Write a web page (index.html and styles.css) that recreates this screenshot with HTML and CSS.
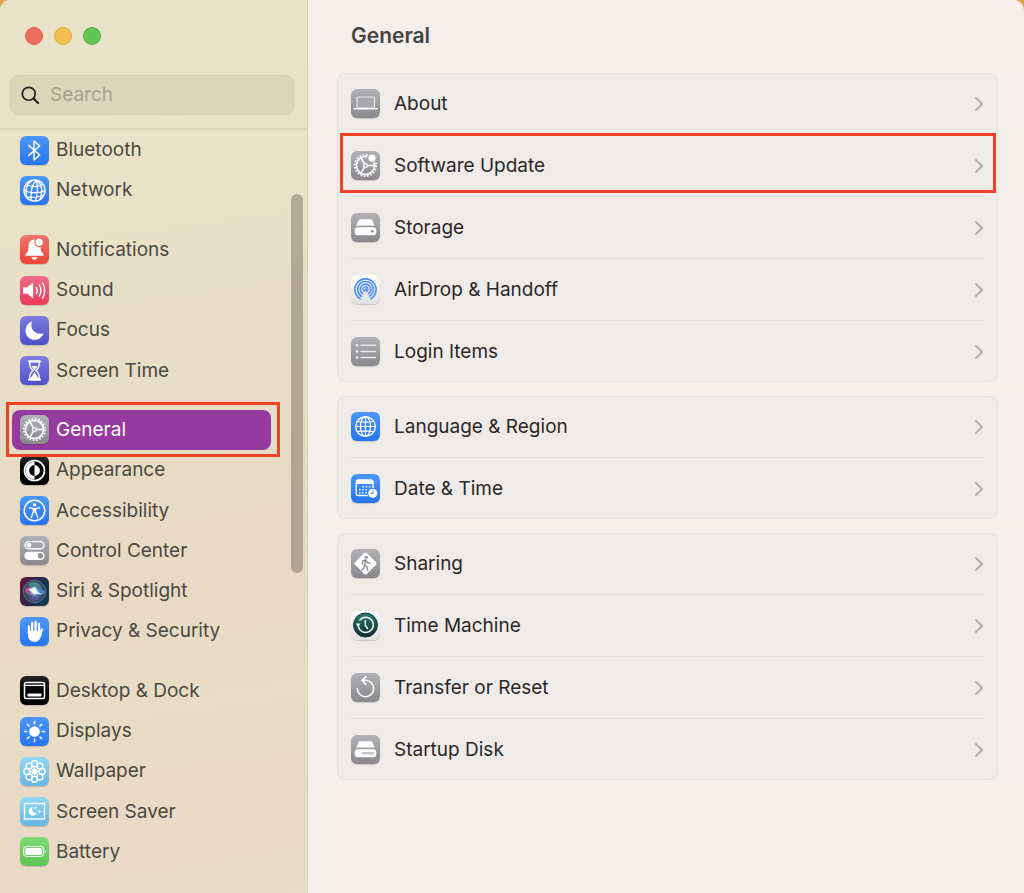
FILE: index.html
```html
<!DOCTYPE html>
<html lang="en">
<head>
<meta charset="utf-8">
<meta name="viewport" content="width=device-width, initial-scale=1">
<title>General</title>
<link rel="stylesheet" href="styles.css">
</head>
<body>
<svg class="defs" aria-hidden="true">
  <symbol id="gear" viewBox="0 0 29 29">
    <circle cx="14.5" cy="14.5" r="10.6" fill="none" stroke="#fff" stroke-width="1.9" stroke-dasharray="1.7 1.63"/>
    <circle cx="14.5" cy="14.5" r="9" fill="none" stroke="#fff" stroke-width="1.5"/>
    <circle cx="14.5" cy="14.5" r="1.9" fill="none" stroke="#fff" stroke-width="1.2"/>
    <path d="M16.4 14.5h7M13.5 12.8L10 6.8M13.5 16.2L10 22.2" fill="none" stroke="#fff" stroke-width="1.4"/>
  </symbol>
</svg>
<div class="window">
  <aside class="sidebar">
    <header class="sidebar-head">
      <div class="lights">
        <button class="light close" aria-label="Close"></button>
        <button class="light minimize" aria-label="Minimize"></button>
        <button class="light expand" aria-label="Zoom"></button>
      </div>
      <label class="search">
        <svg viewBox="0 0 20 20" aria-hidden="true"><g fill="none" stroke="#24221c" stroke-linecap="round"><circle cx="8.2" cy="8.2" r="6.8" stroke-width="1.8"/><path d="M13.2 13.2l4.8 4.8" stroke-width="2.2"/></g></svg>
        <input type="search" placeholder="Search" aria-label="Search">
      </label>
    </header>
    <nav class="nav">
      <ul class="nav-list">
        <li><a class="item" href="#"><svg class="icon blue" viewBox="0 0 29 29"><path d="M8.7 9.4l11 9.6-5.7 5V5l5.7 5-11 9.4" fill="none" stroke="#fff" stroke-width="1.5" stroke-linejoin="round" stroke-linecap="round"/></svg>Bluetooth</a></li>
        <li><a class="item" href="#"><svg class="icon blue" viewBox="0 0 29 29"><g fill="none" stroke="#fff" stroke-width="1.3"><circle cx="14.5" cy="14.5" r="10.5" stroke-width="1.5"/><path d="M16.5 4.2C12 8 10.3 14 11.2 24.5M16.5 4.2C17.5 9 18 17 15.5 25M16.5 4.2C22 8 23 15 20 23.500M12.500 4.300C7 7 5 13 6.800 21.500M6.500 8.500C12 11.200 18 11 23 8.500M4 14.500C11 17.500 18 17.500 25 14.500M6.500 21C12 22 17 21.500 23 19.500"/></g></svg>Network</a></li>
        <li class="group-start"><a class="item" href="#"><svg class="icon red" viewBox="0 0 29 29"><path d="M14.500 4.500c-4.100 0-5.700 3-5.900 7-.2 4-.8 5.500-3 7.500-.5.700-.2 1.800.7 1.800h16.400c.9 0 1.200-1.100.7-1.800-2-2-2.800-3.500-3-7.500z" fill="#fff"/><path d="M11.500 22.300h6c-.5 1.600-1.500 2.400-3 2.400s-2.500-.8-3-2.400z" fill="#fff"/><circle cx="19.200" cy="7.300" r="4.900" fill="#ef6357"/><circle cx="19.200" cy="7.300" r="3.700" fill="#fff"/></svg>Notifications</a></li>
        <li><a class="item" href="#"><svg class="icon pink" viewBox="0 0 29 29"><path d="M4 11.200h3.600l4.400-4c.6-.5 1.100-.3 1.100.500v13.600c0 .8-.5 1-1.100.500l-4.400-4H4c-.7 0-1-.4-1-1v-4.600c0-.6.3-1 1-1z" fill="#fff"/><path d="M16.200 11.300c1.200 1.800 1.200 4.600 0 6.400M19.300 9c2 3.200 2 7.800 0 11M22.500 6.900c2.900 4.500 2.900 10.700 0 15.200" fill="none" stroke="#fff" stroke-width="1.400" stroke-linecap="round"/></svg>Sound</a></li>
        <li><a class="item" href="#"><svg class="icon indigo" viewBox="0 0 29 29"><path d="M12 5.600C9.500 12.500 14.500 19.500 23.500 17.500 22 21.600 18.600 23.800 14.700 23.800 9.700 23.800 5.600 20 5.600 14.700 5.600 10.500 8 7 12 5.600z" fill="#fff"/></svg>Focus</a></li>
        <li><a class="item" href="#"><svg class="icon indigo" viewBox="0 0 29 29"><path d="M9 5.400h11M9 23.600h11" stroke="#fff" stroke-width="2.200" stroke-linecap="round"/><path d="M9.700 6c0 5 .8 6.300 3.500 8.500-2.700 2.200-3.500 3.500-3.500 8.500h9.600c0-5-.8-6.300-3.500-8.500 2.700-2.200 3.500-3.500 3.500-8.500" fill="none" stroke="#fff" stroke-width="1.400"/><path d="M11.300 10h6.400l-3.200 4.200zM14.500 16l4 6.500h-8z" fill="#fff"/></svg>Screen Time</a></li>
        <li class="group-start"><a class="item selected highlight" href="#" aria-current="page"><svg class="icon gray" viewBox="0 0 29 29"><use href="#gear"/></svg>General</a></li>
        <li><a class="item" href="#"><svg class="icon black" viewBox="0 0 29 29"><circle cx="14.500" cy="14.500" r="10" fill="#080808" stroke="#fff" stroke-width="1.700"/><path d="M14.500 5.500a9 9 0 0 0 0 18v-3.600a5.400 5.400 0 0 1 0-10.800z" fill="#fff"/><path d="M14.500 9.100a5.400 5.400 0 0 1 0 10.800z" fill="#fff"/></svg>Appearance</a></li>
        <li><a class="item" href="#"><svg class="icon blue" viewBox="0 0 29 29"><circle cx="14.500" cy="14.500" r="10.300" fill="none" stroke="#fff" stroke-width="1.600"/><circle cx="14.500" cy="8.700" r="1.700" fill="#fff"/><path d="M9.500 11.800l3.800.8v3.500l-2 5.400M19.500 11.800l-3.800.8v3.500l2 5.400" fill="none" stroke="#fff" stroke-width="1.400" stroke-linecap="round" stroke-linejoin="round"/><path d="M13 12h3v4.600h-3z" fill="#fff"/></svg>Accessibility</a></li>
        <li><a class="item" href="#"><svg class="icon gray" viewBox="0 0 29 29"><rect x="5" y="5.600" width="19" height="7.200" rx="3.600" fill="none" stroke="#fff" stroke-width="1.400"/><circle cx="9" cy="9.200" r="2.400" fill="#fff"/><rect x="4.400" y="15.700" width="20.200" height="8.200" rx="4.100" fill="#fff"/><circle cx="20.500" cy="19.800" r="2.700" fill="#8e8e93"/></svg>Control Center</a></li>
        <li><a class="item" href="#"><svg class="icon siri" viewBox="0 0 29 29"><defs><radialGradient id="orb"><stop offset="0" stop-color="#fff"/><stop offset=".25" stop-color="#c9e2f4"/><stop offset=".6" stop-color="#5485b8" stop-opacity=".7"/><stop offset="1" stop-color="#235c7a" stop-opacity=".2"/></radialGradient></defs><circle cx="14.500" cy="14.500" r="11.300" fill="#3b4964" stroke="#458494" stroke-width=".8"/><path d="M5 13c4-5 8-5 10 2-3 5-8 4-10-2z" fill="#e94f8b" opacity=".85"/><path d="M8 7c6-4 12-1 14 5-5 0-10 0-14-5z" fill="#4fb89a" opacity=".65"/><path d="M14 15c3-4 8-4 11 0-3 4-8 4-11 0z" fill="#4ba2ff" opacity=".8"/><path d="M9 22c3-4 8-5 12-2-3 4-8 5-12 2z" fill="#7656b5" opacity=".6"/><circle cx="14.500" cy="14.500" r="7.500" fill="url(#orb)"/><path d="M8 12.500l7-3 2 4.500 5 3.500-7-.5z" fill="#fff" opacity=".75"/></svg>Siri &amp; Spotlight</a></li>
        <li><a class="item" href="#"><svg class="icon blue" viewBox="0 0 29 29"><g fill="none" stroke="#fff" stroke-width="2.300" stroke-linecap="round"><path d="M9 9.500V17M12.200 6v10M15.600 5v11M19 7v10M22 12.500l-2.600 6"/></g><path d="M7.850 14h12.300v2.500l2-1.500c-.9 6.200-3.300 9.800-7.700 9.800-4.600 0-6.600-3.300-6.600-8z" fill="#fff"/></svg>Privacy &amp; Security</a></li>
        <li class="group-start"><a class="item" href="#"><svg class="icon black" viewBox="0 0 29 29"><rect x="4.500" y="6.500" width="20" height="16" rx="1.800" fill="none" stroke="#fff" stroke-width="1.500"/><path d="M5 9.400h19" stroke="#fff" stroke-width="1.100"/><rect x="7.500" y="17.500" width="14" height="3" rx=".8" fill="#fff"/></svg>Desktop &amp; Dock</a></li>
        <li><a class="item" href="#"><svg class="icon blue" viewBox="0 0 29 29"><circle cx="14.500" cy="14.500" r="5.300" fill="#fff"/><path d="M14.500 4.600v2M14.500 22.400v2M4.600 14.500h2M22.400 14.500h2M7.500 7.500l1.400 1.400M20.100 20.100l1.400 1.400M7.500 21.500l1.400-1.400M20.100 8.900l1.400-1.400" stroke="#fff" stroke-width="1.700" stroke-linecap="round"/></svg>Displays</a></li>
        <li><a class="item" href="#"><svg class="icon sky" viewBox="0 0 29 29"><g fill="none" stroke="#fff" stroke-width="1.400"><circle cx="14.500" cy="6.800" r="3"/><circle cx="19.900" cy="9.100" r="3"/><circle cx="22.200" cy="14.500" r="3"/><circle cx="19.900" cy="19.900" r="3"/><circle cx="14.500" cy="22.200" r="3"/><circle cx="9.100" cy="19.900" r="3"/><circle cx="6.800" cy="14.500" r="3"/><circle cx="9.100" cy="9.100" r="3"/><circle cx="14.500" cy="14.500" r="2.200"/><path d="M14.500 9.500v10M9.500 14.500h10M11 11l7 7M18 11l-7 7" stroke-width="1"/></g></svg>Wallpaper</a></li>
        <li><a class="item" href="#"><svg class="icon sky" viewBox="0 0 29 29"><rect x="4.500" y="6.500" width="20" height="15.500" fill="none" stroke="#fff" stroke-width="1.400"/><path d="M12.500 10c-1.300 4 1 6.600 4.500 6.200-1 1.700-2.400 2.400-4 2.400-2.500 0-4.300-1.800-4.300-4.200 0-2.200 1.500-3.900 3.800-4.400zM15.600 9.200l.5 1.300 1.300.5-1.300.5-.5 1.300-.5-1.300-1.300-.5 1.300-.5zM19.500 12.200l.6 1.700 1.700.6-1.700.6-.6 1.700-.6-1.700-1.700-.6 1.700-.6z" fill="#fff"/></svg>Screen Saver</a></li>
        <li><a class="item" href="#"><svg class="icon green" viewBox="0 0 29 29"><rect x="3.600" y="9.500" width="20" height="10" rx="3" fill="none" stroke="#fff" stroke-width="1.200" opacity=".8"/><rect x="5.300" y="11.100" width="16.600" height="6.800" rx="1.600" fill="#fff"/><path d="M24.900 12.700c1.300.7 1.300 2.900 0 3.600z" fill="#fff"/></svg>Battery</a></li>
      </ul>
      <span class="scroll-thumb"></span>
    </nav>
  </aside>
  <main class="content">
    <h1 class="title">General</h1>
    <section class="card">
      <a class="row" href="#"><svg class="icon gray" viewBox="0 0 29 29"><rect x="6" y="8" width="17.500" height="11" rx="1.200" fill="#a9a9ad" stroke="#e8e8e9" stroke-width="1.200"/><path d="M3.200 19.700h22.600" stroke="#fff" stroke-width="1.500" stroke-linecap="round"/></svg><span class="name">About</span><svg class="chev" viewBox="0 0 10 16"><path d="M2 2l6 6-6 6"/></svg></a>
      <a class="row highlight" href="#"><svg class="icon gray" viewBox="0 0 29 29"><use href="#gear"/><circle cx="21" cy="7" r="4.800" fill="#adadb1"/><circle cx="21" cy="7" r="3.600" fill="#fff"/></svg><span class="name">Software Update</span><svg class="chev" viewBox="0 0 10 16"><path d="M2 2l6 6-6 6"/></svg></a>
      <a class="row" href="#"><svg class="icon gray" viewBox="0 0 29 29"><path d="M9.300 6.300h10.400c1 0 1.600.5 1.900 1.300l2.200 5.300c-1-.4-17.600-.4-18.600 0l2.200-5.300c.3-.8.900-1.300 1.900-1.300z" fill="#fff"/><rect x="3.700" y="14.300" width="21.600" height="8" rx="3" fill="#fff"/><circle cx="21.300" cy="18.300" r="1.300" fill="#8e8e93"/></svg><span class="name">Storage</span><svg class="chev" viewBox="0 0 10 16"><path d="M2 2l6 6-6 6"/></svg></a>
      <a class="row" href="#"><svg class="icon white" viewBox="0 0 29 29"><g fill="none" stroke="#4a8ef5" stroke-width="1.600" stroke-linecap="round"><path d="M9.200 23.700a10.600 10.600 0 1 1 10.600 0M10.400 21.200a7.900 7.900 0 1 1 8.200 0M11.700 18.700a5.200 5.200 0 1 1 5.600 0"/><path d="M13.200 16.500a2.500 2.500 0 1 1 2.600 0" stroke-width="1.200"/></g><circle cx="14.500" cy="14.700" r="1.500" fill="#4a8ef5"/></svg><span class="name">AirDrop &amp; Handoff</span><svg class="chev" viewBox="0 0 10 16"><path d="M2 2l6 6-6 6"/></svg></a>
      <a class="row" href="#"><svg class="icon gray" viewBox="0 0 29 29"><path d="M10 8.300h14.500M10 14.500h14.500M10 20.500h14.500" stroke="#e5e5e7" stroke-width="1.500" stroke-linecap="round"/><g fill="#f2f2f3"><circle cx="6" cy="8.300" r="1.300"/><circle cx="6" cy="14.500" r="1.300"/><circle cx="6" cy="20.500" r="1.300"/></g></svg><span class="name">Login Items</span><svg class="chev" viewBox="0 0 10 16"><path d="M2 2l6 6-6 6"/></svg></a>
    </section>
    <section class="card">
      <a class="row" href="#"><svg class="icon blue" viewBox="0 0 29 29"><g fill="none" stroke="#fff" stroke-width="1.200"><circle cx="14.500" cy="14.500" r="9.800" stroke-width="1.400"/><ellipse cx="14.500" cy="14.500" rx="5" ry="9.800"/><path d="M14.500 4.700v19.600M4.700 14.500h19.600M6.600 9.200c4 1.300 11.800 1.300 15.800 0M6.600 19.800c4-1.300 11.800-1.300 15.800 0"/></g></svg><span class="name">Language &amp; Region</span><svg class="chev" viewBox="0 0 10 16"><path d="M2 2l6 6-6 6"/></svg></a>
      <a class="row" href="#"><svg class="icon blue" viewBox="0 0 29 29"><rect x="5.200" y="6.200" width="16.800" height="15.300" rx="2" fill="none" stroke="#fff" stroke-width="1.400"/><path d="M5 10V7.500c0-1.300.7-2 2-2h13.200c1.300 0 2 .7 2 2V10z" fill="#fff"/><path d="M11.500 12.700h9M8 15.700h12M8 18.700h9" stroke="#fff" stroke-width="1.500" stroke-dasharray="1.500 1.700"/><circle cx="21.800" cy="19.300" r="5.600" fill="#347ff4"/><circle cx="21.800" cy="19.300" r="4.600" fill="#fff"/><path d="M21.900 16.500v3h-2.200" fill="none" stroke="#347ff4" stroke-width="1"/></svg><span class="name">Date &amp; Time</span><svg class="chev" viewBox="0 0 10 16"><path d="M2 2l6 6-6 6"/></svg></a>
    </section>
    <section class="card">
      <a class="row" href="#"><svg class="icon gray" viewBox="0 0 29 29"><path d="M13.200 4c.8-.8 1.800-.8 2.600 0l9.200 9.200c.8.800.8 1.800 0 2.600L15.800 25c-.8.800-1.800.8-2.600 0L4 15.800c-.8-.8-.8-1.800 0-2.600z" fill="#fff"/><g fill="none" stroke="#8e8e93" stroke-width="1.400" stroke-linecap="round" stroke-linejoin="round"><path d="M11.200 15l.6-3 2.700-1.200 1.800 2.700 2.600.6M14.400 11.500l-.7 4.500 2.300 2 .8 3.200M13.500 16.500l-.7 2.500-2 2.300"/></g><circle cx="15.200" cy="8.300" r="1.500" fill="#8e8e93"/></svg><span class="name">Sharing</span><svg class="chev" viewBox="0 0 10 16"><path d="M2 2l6 6-6 6"/></svg></a>
      <a class="row" href="#"><svg class="icon white" viewBox="0 0 29 29"><defs><linearGradient id="dial" x2="0" y2="1"><stop stop-color="#2f796c"/><stop offset="1" stop-color="#102a30"/></linearGradient></defs><circle cx="14.500" cy="14" r="12" fill="url(#dial)" stroke="#173b3b" stroke-width="1"/><path d="M7.200 15.200a7.600 7.600 0 1 0 1.600-6.200M14.300 9.500v4.700l2.200 3.300" fill="none" stroke="#e5f2ee" stroke-width="1.500" stroke-linecap="round"/><path d="M4.700 12.600h5l-2.500 3.400z" fill="#e5f2ee"/></svg><span class="name">Time Machine</span><svg class="chev" viewBox="0 0 10 16"><path d="M2 2l6 6-6 6"/></svg></a>
      <a class="row" href="#"><svg class="icon gray" viewBox="0 0 29 29"><path d="M6.300 15.500A8.200 8.200 0 1 0 14.500 7.300h-3M15 3.700l-4 3.600 3.700 4" fill="none" stroke="#fff" stroke-width="1.600" stroke-linecap="round" stroke-linejoin="round"/></svg><span class="name">Transfer or Reset</span><svg class="chev" viewBox="0 0 10 16"><path d="M2 2l6 6-6 6"/></svg></a>
      <a class="row" href="#"><svg class="icon gray" viewBox="0 0 29 29"><path d="M9.300 6.300h10.400c1 0 1.600.5 1.900 1.300l2.200 5.300c-1-.4-17.600-.4-18.600 0l2.200-5.300c.3-.8.900-1.300 1.900-1.300z" fill="#fff"/><rect x="3.700" y="14.300" width="21.600" height="8" rx="3" fill="#fff"/><path d="M11.500 18.300h11" stroke="#8e8e93" stroke-width="2.600" stroke-dasharray="1 1"/></svg><span class="name">Startup Disk</span><svg class="chev" viewBox="0 0 10 16"><path d="M2 2l6 6-6 6"/></svg></a>
    </section>
  </main>
</div>
</body>
</html>
```
FILE: styles.css
```css
* { box-sizing: border-box; }
body {
  margin: 0;
  background: #dfa349;
  font-family: Inter, "Liberation Sans", sans-serif;
  font-size: 19px;
  line-height: 24px;
}
a { color: inherit; text-decoration: none; }
.defs { position: absolute; width: 0; height: 0; }

.window {
  display: grid;
  grid-template-columns: 308px minmax(0, 1fr);
  min-height: 100vh;
  border-radius: 10px 10px 0 0;
  overflow: hidden;
  background: #f4efeb;
  color: #2a2827;
}

/* Sidebar */
.sidebar {
  display: flex;
  flex-direction: column;
  border-right: 1px solid #d5cdbb;
  background: linear-gradient(172deg, #e9e4c7 0%, #e8e3c6 24%, #e8dec7 34%, #e7dbc4 52%, #e9d9c6 64%, #e8dcc4 78%, #e9d9c7 91%, #e8dcc6 100%);
  color: #4b4940;
}
.sidebar-head {
  display: flex;
  flex-direction: column;
  gap: 30px;
  padding: 27px 13px 13px 10px;
  border-bottom: 2px solid #d8d1b6;
}
.lights { display: flex; gap: 11px; padding-left: 15px; }
.light {
  width: 18px;
  height: 18px;
  padding: 0;
  border: 1px solid;
  border-radius: 50%;
}
.close { background: #ed6b5f; border-color: #df6257; }
.minimize { background: #f6be4f; border-color: #e0aa43; }
.expand { background: #62c655; border-color: #55b148; }
.search {
  display: flex;
  align-items: center;
  gap: 10px;
  height: 40px;
  padding: 0 10px;
  border: 1px solid #d5cfb3;
  border-radius: 8px;
  background: #dcd6b9;
}
.search svg { flex: none; width: 19px; height: 19px; }
.search input {
  flex: 1;
  min-width: 0;
  padding: 0;
  border: 0;
  outline: 0;
  background: none;
  font: inherit;
  color: #2a2827;
}
.search input::placeholder { color: #a6a08a; opacity: 1; }

.nav {
  position: relative;
  display: flex;
  flex: 1;
}
.nav-list {
  display: flex;
  flex: 1;
  flex-direction: column;
  margin: 0;
  padding: 0 36px 21px 12px;
  list-style: none;
}
.nav-list li { display: flex; flex: 1 1 0; min-height: 40px; }
.group-start { margin-top: 19px; }
.item {
  position: relative;
  display: flex;
  flex: 1;
  align-items: center;
  gap: 7px;
  padding-left: 8px;
  border-radius: 8px;
}
.selected { background: #953b9f; color: #fff; }
.scroll-thumb {
  position: absolute;
  top: 64px;
  right: 4px;
  width: 12px;
  height: 379px;
  border-radius: 6px;
  background: rgb(90 80 70 / 38%);
}

/* Red call-out frames */
.highlight::after {
  content: "";
  position: absolute;
  z-index: 1;
  border: 3px solid #ec4328;
  pointer-events: none;
}
.item.highlight::after { inset: -8px -9px -7px -6px; }
.row.highlight::after { inset: -2px -12px 3px -11px; }

/* Icons */
.icon {
  flex: none;
  width: 29px;
  height: 29px;
  border-radius: 6px;
  box-shadow: 0 1px 1px rgb(0 0 0 / 16%);
}
.blue { background: linear-gradient(#4b97f8, #2774f3); }
.red { background: linear-gradient(#f0766c, #ea4435); }
.pink { background: linear-gradient(#ee6c8a, #e93b57); }
.indigo { background: linear-gradient(#7c7ce0, #5050c8); }
.gray { background: linear-gradient(#b2b2b6, #87878c); }
.black { background: linear-gradient(#262626, #000 60%); }
.sky { background: linear-gradient(#92d8f6, #68b5e4); }
.green { background: linear-gradient(#7edb76, #5fc354); }
.white { background: linear-gradient(#fefefe, #e1e1e1); }
.siri { background: linear-gradient(110deg, #6b1238, #292649 48%, #123857 75%, #123a38); }

/* Content */
.content {
  display: flex;
  flex-direction: column;
  gap: 14px;
  padding: 24px 26px 24px 29px;
}
.title {
  margin: 0 0 11px;
  padding-left: 14px;
  font-size: 21px;
  line-height: 24px;
  font-weight: 600;
  color: #474442;
}
.card {
  padding: 0 14px;
  border-radius: 8px;
  background: #efebe8;
  box-shadow: inset 0 0 0 1px #e6e2df;
}
.row {
  position: relative;
  display: flex;
  align-items: center;
  gap: 14px;
  min-height: 61px;
}
.row + .row {
  min-height: 62px;
  border-top: 1px solid #e3dfdc;
}
.name { flex: 1; }
.chev {
  flex: none;
  width: 10px;
  height: 16px;
  fill: none;
  stroke: #b3afac;
  stroke-width: 2;
  stroke-linecap: round;
  stroke-linejoin: round;
}
```
